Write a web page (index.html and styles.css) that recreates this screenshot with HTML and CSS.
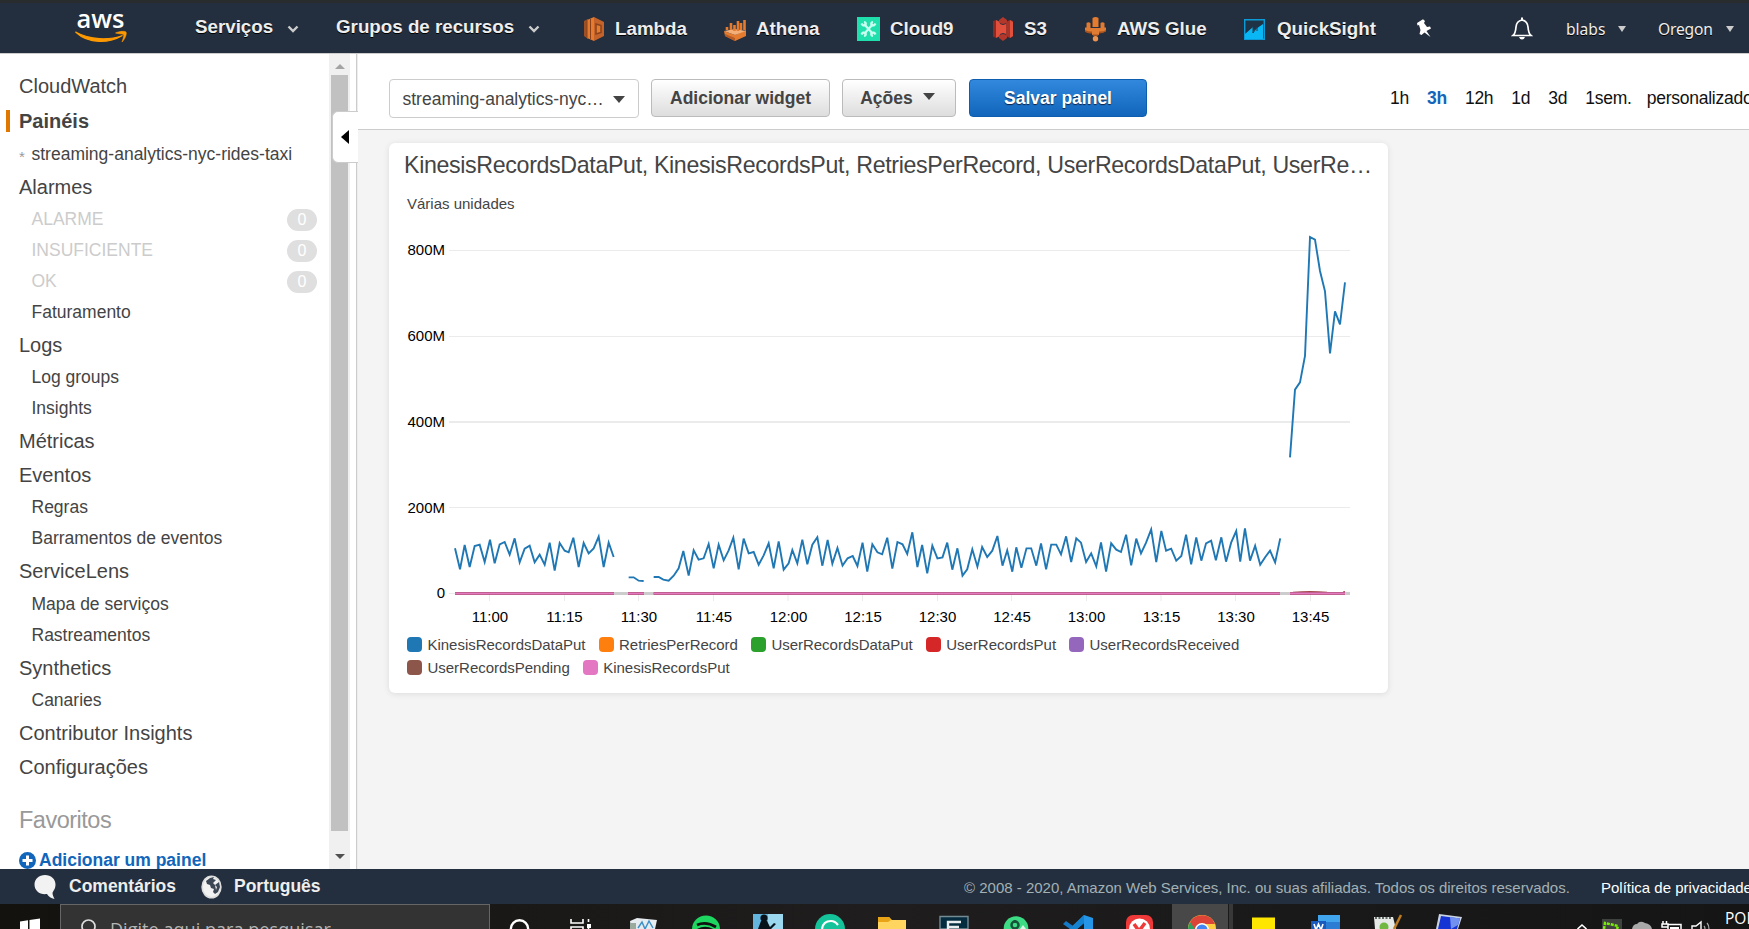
FILE: index.html
```html
<!DOCTYPE html>
<html lang="pt-BR">
<head>
<meta charset="utf-8">
<title>CloudWatch</title>
<link rel="stylesheet" href="styles.css">
</head>
<body>
<header class="nav">
  <svg class="logo" width="54" height="36" viewBox="0 0 54 36"><text x="1.5" y="17" textLength="48" lengthAdjust="spacingAndGlyphs" class="logo-text">aws</text><path d="M.500 21C14 33.500 34 32.500 47.500 24.500C34 29.500 15 29 .500 21Z" fill="#f90" stroke="#f90" stroke-width="1.200"/><path d="M40.500 22C45 20 50 20 51 21C52 23 50 28 47 31C48.500 26.500 49 24.500 48.500 23.500C47 22.500 43 23 40.500 22Z" fill="#f90" stroke="#f90" stroke-width=".600"/></svg>
  <a class="menu services">Serviços<svg width="12" height="8" viewBox="0 0 12 8"><path d="M1.500 1.500L6 6L10.500 1.500" class="chev"/></svg></a>
  <a class="menu groups">Grupos de recursos<svg width="12" height="8" viewBox="0 0 12 8"><path d="M1.500 1.500L6 6L10.500 1.500" class="chev"/></svg></a>
  <a class="pinned lambda"><svg width="22" height="26" viewBox="0 0 22 26"><path d="M1 5L5 3V23L1 20Z" fill="#9d5025"/><path d="M4 4L11 1V25L4 22Z" fill="#e57b2e"/><path d="M11 1L21 6V20L11 25Z" fill="#c4622a"/><path d="M4 4V22M7.500 3V23" stroke="#8a431d" stroke-width="1"/><path d="M13 8L18 9.500V16.500L13 18Z" fill="#e57b2e" stroke="#8a431d" stroke-width="1.500"/></svg><span>Lambda</span></a>
  <a class="pinned athena"><svg width="22" height="26" viewBox="0 0 22 26"><path d="M0 15L11 19L22 14V20L11 25L1 20Z" fill="#e57b2e"/><path d="M0 15L11 13L22 15L11 19Z" fill="#f4ae76"/><path d="M3 14V11M7 14V7M10.500 15V9M14 15V5M17 14V7M20.500 14V4" stroke="#e57b2e" stroke-width="2.600"/><path d="M1 18L11 22V25L1 20Z" fill="#b35a26"/></svg><span>Athena</span></a>
  <a class="pinned cloud9"><svg width="23" height="24" viewBox="0 0 23 24"><path d="M0 0H23V24H0Z" fill="#1fe0ad"/><g fill="none" stroke="#c9fff0" stroke-width="2.200"><path d="M7 7L16 17M16 7L7 17"/><path d="M4.500 6.500Q6 9.500 8.500 8Q9.500 5.500 7 5M18.500 6.500Q17 9.500 14.500 8Q13.500 5.500 16 5M4.500 17.500Q6 14.500 8.500 16Q9.500 18.500 7 19M18.500 17.500Q17 14.500 14.500 16Q13.500 18.500 16 19"/></g></svg><span>Cloud9</span></a>
  <a class="pinned s3"><svg width="22" height="26" viewBox="0 0 22 26"><path d="M1 5L4 4V22L1 20.500ZM21 5L18 4V22L21 20.500Z" fill="#8c2b23"/><path d="M4 4L8 6V20L4 22ZM18 4L21 6V20L18 22Z" fill="#e0503c"/><path d="M8 8L11 9L14 8V18L11 17L8 18Z" fill="#e0503c"/><path d="M7 4L11 1L15 4L15 7L11 8L7 7ZM7 22L11 25L15 22V19L11 18L7 19Z" fill="#b3372b"/><path d="M14 6L18 4V22L14 20Z" fill="#a5342a"/></svg><span>S3</span></a>
  <a class="pinned glue"><svg width="23" height="26" viewBox="0 0 23 26"><path d="M8.500 2Q11.500 0 14.500 2V11H8.500Z" fill="#e57b2e"/><path d="M2.500 7Q4.500 5.500 6.500 7V12H16.500V7Q18.500 5.500 20.500 7V11.500H22V15Q19 17 15 16.500V19H8V16.500Q3 17 1 15V11.500H2.500Z" fill="#e07b33"/><path d="M1 14Q5 16 8 15.500V17.500Q3 17.500 1 15.500ZM22 14Q19 16 15 15.500V17.500Q19 17.500 22 15.500Z" fill="#a5521f"/><path d="M8 18.500H15L13 20.500H10Z" fill="#a5521f"/><circle cx="11.500" cy="22.800" r="2.700" fill="#ef9350"/></svg><span>AWS Glue</span></a>
  <a class="pinned quick"><svg width="21" height="21" viewBox="0 0 21 21"><path d="M.7.700H20.300V20.300H.7Z" fill="#1f3347" stroke="#0b9bd8" stroke-width="1.400"/><path d="M1 15L9 8V12L19 5V20H1Z" fill="#0ab7f5"/><path d="M9 7.500V14L13 8V12" stroke="#1f3c50" fill="none"/></svg><span>QuickSight</span></a>
  <svg class="pin" width="18" height="18" viewBox="0 0 18 18"><path d="M2 4L8 .3L10 2L9 4L12 8L15 7.500L16 9.500L11.500 12L15.500 18L9.500 13.500L6.500 16L4.500 15L5.500 11L4 6L2.500 6.500Z" fill="#fff"/></svg>
  <svg class="bell" width="22" height="23" viewBox="0 0 22 23"><path d="M2 18.500Q4.500 16.500 5 10Q5.500 4 11 3Q16.500 4 17 10Q17.500 16.500 20 18.500Z" fill="none" stroke="#fff" stroke-width="1.700"/><path d="M8 20H14Q13 22.500 11 22.500Q9 22.500 8 20ZM10 .5H12V4H10Z" fill="#fff"/></svg>
  <a class="account user">blabs<i></i></a>
  <a class="account region">Oregon<i></i></a>
</header>

<div class="body">
  <div class="side">
    <nav class="links">
      <a class="head first">CloudWatch</a>
      <a class="head current">Painéis</a>
      <a class="sub board"><small>*</small>streaming-analytics-nyc-rides-taxi</a>
      <a class="head">Alarmes</a>
      <a class="sub off">ALARME<b>0</b></a>
      <a class="sub off">INSUFICIENTE<b>0</b></a>
      <a class="sub off">OK<b>0</b></a>
      <a class="sub">Faturamento</a>
      <a class="head">Logs</a>
      <a class="sub">Log groups</a>
      <a class="sub">Insights</a>
      <a class="head">Métricas</a>
      <a class="head">Eventos</a>
      <a class="sub">Regras</a>
      <a class="sub">Barramentos de eventos</a>
      <a class="head tall">ServiceLens</a>
      <a class="sub">Mapa de serviços</a>
      <a class="sub">Rastreamentos</a>
      <a class="head">Synthetics</a>
      <a class="sub">Canaries</a>
      <a class="head">Contributor Insights</a>
      <a class="head tall">Configurações</a>
      <div class="favs">Favoritos</div>
      <a class="add"><svg width="17" height="17" viewBox="0 0 17 17"><circle cx="8.500" cy="8.500" r="8.500" fill="#1166bb"/><path d="M8.500 3.500V13.500M3.500 8.500H13.500" stroke="#fff" stroke-width="3"/></svg>Adicionar um painel</a>
    </nav>
    <div class="scroll"><i class="up"></i><div class="thumb"></div><i class="down"></i></div>
    <div class="collapse"><i></i></div>
  </div>

  <main class="main">
    <div class="toolbar">
      <div class="select">streaming-analytics-nyc…<i></i></div>
      <div class="btn widget">Adicionar widget</div>
      <div class="btn actions">Ações<i></i></div>
      <div class="btn primary">Salvar painel</div>
      <div class="ranges"><a>1h</a><a class="on">3h</a><a>12h</a><a>1d</a><a>3d</a><a>1sem.</a><a class="custom">personalizado</a></div>
    </div>
    <section class="card">
      <h2>KinesisRecordsDataPut, KinesisRecordsPut, RetriesPerRecord, UserRecordsDataPut, UserRe…</h2>
      <p class="unit">Várias unidades</p>
      <svg class="chart" width="999" height="415" viewBox="389 218 999 415">
        <g class="grid"><path d="M449 250.500H1350M449 336.500H1350M449 507.500H1350"/><path d="M449 422H1350" stroke-width="2"/><path d="M449 593.500H455"/><path d="M489.500 595V601M564.500 595V601M638.500 595V601M713.500 595V601M788 595V601M862.500 595V601M937.500 595V601M1011.500 595V601M1086.500 595V601M1161 595V601M1235.500 595V601M1310.500 595V601"/></g>
        <g class="ylab"><text x="445" y="255">800M</text><text x="445" y="341">600M</text><text x="445" y="427">400M</text><text x="445" y="513">200M</text><text x="445" y="598">0</text></g>
        <g class="xlab"><text x="490" y="622">11:00</text><text x="564.500" y="622">11:15</text><text x="639" y="622">11:30</text><text x="714" y="622">11:45</text><text x="788.500" y="622">12:00</text><text x="863" y="622">12:15</text><text x="937.500" y="622">12:30</text><text x="1012" y="622">12:45</text><text x="1086.500" y="622">13:00</text><text x="1161.500" y="622">13:15</text><text x="1236" y="622">13:30</text><text x="1310.500" y="622">13:45</text></g>
        <path d="M455 593.500H1350" stroke="#ccc" stroke-width="3"/>
        <path d="M1293 592.300Q1310 591 1327 592.300M1343 592L1345 591.500" stroke="#a5484a" stroke-width="1.200" fill="none"/>
        <path d="M455 593.500H614M628 593.500H644M653.500 593.500H1280M1290 593.500H1345" stroke="#c0608f" stroke-width="3"/>
        <path d="M455 593.500H614M628 593.500H644M653.500 593.500H1280M1290 593.500H1345" stroke="#e377c2" stroke-width="1"/>
        <g class="line" transform="translate(380 500) scale(.33333)">
          <polyline points="225,145 240,208 254,135 269,201 284,138 299,134 314,186 330,119 344,190 359,133 374,126 389,164 404,115 419,187 434,146 449,137 464,187 479,164 494,194 509,128 524,212 539,129 554,152 566,157 580,113 596,201 611,129 626,160 641,145 656,110 671,201 686,128 701,171"/>
          <polyline points="746,232 761,232 776,242 791,243"/>
          <polyline points="821,231 836,231 850,239 866,242 881,227 896,205 910,153 926,227 941,151 956,179 971,175 986,132 1001,205 1016,134 1031,181 1046,151 1060,113 1076,208 1091,116 1106,160 1121,156 1136,194 1151,166 1166,130 1181,205 1196,124 1211,209 1226,190 1237,150 1252,190 1267,119 1282,193 1297,134 1312,112 1327,197"/>
        </g>
        <g class="line" transform="translate(820 500) scale(.36352 .33333)">
          <polyline points="6.500,197 21,120 34,191 48,144 62,197 76,175 90,168 103,198 117,128 130,215 144,133 158,157 171,163 185,113 199,206 213,126 227,133 240,162 254,97 268,201 281,135 295,220 309,137 323,175 337,172 350,128 364,209 378,145 392,227 405,208 419,148 433,200 446,141 460,171 474,152 488,108 502,197 515,151 529,215 540,142 554,203 568,145 581,145 595,197 608,130 622,208 636,134 650,134 663,163 677,109 691,186 705,115 718,128 732,186 746,160 760,199 773,127 787,215 801,130 815,149 828,156 842,104 856,196 870,116 883,160 897,128 911,88 925,186 939,93 952,152 966,146 980,182 994,168 1007,104 1021,193 1035,112 1049,182 1062,130 1076,122 1089,181 1104,112 1117,185 1131,128 1145,93 1156,185 1169,85 1183,182 1197,137 1211,194 1225,171 1238,152 1252,187 1266,115"/>
        </g>
        <g class="line" transform="translate(1270 220) scale(.33333)">
          <polyline points="60,712 75,509 90,487 105,408 120,51 135,59 150,153 165,214 180,400 195,274 210,313 225,187"/>
        </g>
      </svg>
      <ul class="legend">
        <li class="c1">KinesisRecordsDataPut</li><li class="c2">RetriesPerRecord</li><li class="c3">UserRecordsDataPut</li><li class="c4">UserRecordsPut</li><li class="c5">UserRecordsReceived</li>
      </ul>
      <ul class="legend">
        <li class="c6">UserRecordsPending</li><li class="c7">KinesisRecordsPut</li>
      </ul>
    </section>
  </main>
</div>

<footer class="footer">
  <svg class="bubble" width="22" height="24" viewBox="0 0 22 24"><path d="M11 0C17 0 21.500 4 21.500 9.500C21.500 14 19 16 18.500 18C18.500 20 19.500 22 20.500 24C17 23.500 14.500 21.500 13 19C6 20 .5 16 .5 9.500C.5 4 5 0 11 0Z" fill="#f2f2f2"/></svg>
  <b class="comments">Comentários</b>
  <svg class="globe" width="21" height="24" viewBox="0 0 21 24"><ellipse cx="10.500" cy="12" rx="9.400" ry="10.800" fill="#f2f2f2" stroke="#ddd" stroke-width="1.600"/><path d="M9 3L13 2L12 4L15 5L12 8L14 10L18 7L19 12L17 17L14 19L12 17L13 14L10 13L9 10L6 9L5 6Z" fill="#3c4654"/><path d="M14 10L16 12L15 15Z" fill="#f2f2f2"/></svg>
  <b class="lang">Português</b>
  <span class="copy">© 2008 - 2020, Amazon Web Services, Inc. ou suas afiliadas. Todos os direitos reservados.</span>
  <a class="policy">Política de privacidade</a>
</footer>

<div class="taskbar">
  <svg class="win" width="60" height="25" viewBox="0 0 60 25"><path d="M20 17.500L28 16.300V25H20ZM29.500 16L40 14.500V25H29.500Z" fill="#fff"/></svg>
  <div class="search"><svg width="18" height="25" viewBox="0 0 18 25"><circle cx="9.500" cy="21.500" r="6.500" fill="none" stroke="#ddd" stroke-width="1.700"/></svg><span>Digite aqui para pesquisar</span></div>
  <svg class="apps" width="1259" height="25" viewBox="490 0 1259 25">
    <circle cx="519.500" cy="25" r="8.700" fill="none" stroke="#fff" stroke-width="2.400"/>
    <path d="M571 15V19H583V15M571 25V23H583V25M588.500 15V18M588.500 21V25" fill="none" stroke="#fff" stroke-width="1.600"/><path d="M587 20H591V24H587Z" fill="#fff"/>
    <path d="M630 17L637 14L657 16L655 25H631Z" fill="#e6ecef"/><path d="M630 19H636V25H630Z" fill="#9aaa9c"/><path d="M638 24L642 18L645 25L649 17L653 24" fill="none" stroke="#3e91c7" stroke-width="1.500"/>
    <circle cx="706" cy="25.500" r="14" fill="#1ed760"/><path d="M697 21Q706 17 716 23M698 26Q706 22 714 27" fill="none" stroke="#111" stroke-width="2.800"/>
    <path d="M753 10H783V25H753Z" fill="#64b5de"/><path d="M768 10H783V25H768Z" fill="#9bd8f0"/><circle cx="764" cy="14" r="3.600" fill="#08121a"/><path d="M758 25L761 17L767 17L770 23L774 19L776 20L771 25Z" fill="#08121a"/>
    <circle cx="830" cy="25" r="15" fill="#15c39a"/><path d="M822 25Q823 17 831 17Q835 17 838 21" fill="none" stroke="#fff" stroke-width="2.200"/>
    <path d="M878 25V13H889L892 16H906V25Z" fill="#ffd45f"/><path d="M878 13H889L891 16L888 18H878Z" fill="#e8a317"/>
    <path d="M940 12.500H968V25H940Z" fill="#052c3e" stroke="#748b94" stroke-width="1.400"/><path d="M961 18H948V25M948 23H959" fill="none" stroke="#e8eef0" stroke-width="2.400"/>
    <circle cx="1016" cy="24.500" r="12.300" fill="#3ddc84"/><circle cx="1015" cy="21" r="3.500" fill="none" stroke="#17533b" stroke-width="2.500"/><path d="M1015 16V19" stroke="#17533b" stroke-width="2.500"/><path d="M1020 25L1023 21L1026 25" fill="#d9f8e8"/>
    <path d="M1084 11L1093 14V25H1084V19L1077 25H1070Z" fill="#2595e8"/><path d="M1063 20L1066 17L1073 22L1070 25Z" fill="#1679c8"/><path d="M1084 11V19L1077 25H1069Z" fill="#1482cf"/>
    <rect x="1126" y="11" width="27" height="22" rx="7" fill="#ef3939"/><circle cx="1139.500" cy="25" r="10.500" fill="#fff"/><path d="M1134 20L1139 27L1145 19" fill="none" stroke="#ef3939" stroke-width="3.500"/>
    <path d="M1172 0H1228V25H1172Z" fill="#484848"/><path d="M1229 0H1233V25H1229Z" fill="#383838"/>
    <circle cx="1202" cy="25" r="14" fill="#ffcd40"/><path d="M1188 25A14 14 0 0 1 1190 18L1197 25Z" fill="#2da160"/><path d="M1190 18A14 14 0 0 1 1215 20H1202Q1196 21 1195 25Z" fill="#db4437"/><circle cx="1202" cy="26" r="7" fill="#fff"/><circle cx="1202" cy="26" r="5.500" fill="#4285f4"/>
    <path d="M1252 13.500H1275V25H1252Z" fill="#ffe600"/>
    <path d="M1318 11H1340V25H1318Z" fill="#41a5ee"/><path d="M1318 18H1340V25H1318Z" fill="#2b7cd3"/><path d="M1311 17H1326V25H1311Z" fill="#185abd"/><path d="M1314 20L1316 26L1318.500 20L1321 26L1323 20" fill="none" stroke="#fff" stroke-width="1.600"/>
    <path d="M1374 13H1393L1396 25H1375Z" fill="#e6e9e5"/><path d="M1375 14H1392" stroke="#5f6965" stroke-dasharray="2 1.500" stroke-width="2"/><circle cx="1384" cy="23" r="4.500" fill="#70b840"/><path d="M1401 11L1394 25" stroke="#bd7b22" stroke-width="2.500"/>
    <path d="M1439 10L1462 13L1458 25H1436Z" fill="#c8d2e1"/><path d="M1441 12L1460 14.500L1457 25H1438Z" fill="#1634d4"/><path d="M1450 13L1460 14.500L1458 21L1451 25Z" fill="#7290f0"/>
    <path d="M1577.500 25L1582 21L1586.500 25" fill="none" stroke="#fff" stroke-width="1.600"/>
    <path d="M1602 15H1622V25H1602Z" fill="#3f4340"/><path d="M1604 25L1605 19L1618 22L1617 25" fill="none" stroke="#76f000" stroke-width="2.500" stroke-dasharray="3 1"/>
    <path d="M1632 25Q1633 20 1637 20Q1640 16 1645 19Q1651 20 1652 25Z" fill="#a9a9a9"/>
    <path d="M1668 25V20.500H1681V25M1663 17V20M1666.500 17V20M1662 20H1668V23H1662Z" fill="none" stroke="#fff" stroke-width="1.500"/><path d="M1670 23H1679V25H1670Z" fill="#fff"/>
    <path d="M1692 25V22H1696L1701 18V25" fill="none" stroke="#fff" stroke-width="1.400"/><path d="M1704 22Q1705 23 1705 25M1707 19Q1709 21 1709 25" fill="none" stroke="#aaa" stroke-width="1.200"/>
    <text x="1725" y="20" class="kbd">POR</text>
  </svg>
</div>
</body>
</html>
```

FILE: styles.css
```css
* { box-sizing: border-box; }
html, body { margin: 0; height: 929px; overflow: hidden; }
body { display: flex; flex-direction: column; width: 1749px; background: #f4f4f4; font-family: "Liberation Sans", Arial, sans-serif; color: #444; white-space: nowrap; }
i { display: block; width: 0; height: 0; flex: none; }
svg { flex: none; display: block; }

/* top navigation */
.nav { height: 54px; flex: none; background: #232f3e; border-top: 3px solid #292c2e; border-bottom: 1px solid #ccc; display: flex; align-items: flex-start; padding-left: 75px; color: #eee; font-size: 18.75px; font-weight: bold; line-height: 22px; text-shadow: 0 1px 0 #000; }
.logo { margin-top: 8px; }
.logo-text { font: 600 26px "Open Sans", sans-serif; fill: #fff; text-shadow: none; }
.chev { fill: none; stroke: #ccc; stroke-width: 2.4; }
.menu { display: flex; align-items: center; margin-top: 13px; justify-content: space-between; }
.menu svg { margin-top: 4px; }
.services { margin-left: 66px; width: 104px; }
.groups { margin-left: 37px; width: 204px; }
.pinned { display: flex; align-items: center; height: 28px; margin-top: 12px; width: 141px; gap: 10px; }
.pinned span { margin-top: -1px; }
.lambda { margin-left: 43px; }
.athena { width: 133px; }
.cloud9 { width: 135px; }
.s3 { width: 92px; }
.glue { width: 160px; }
.quick { width: 171px; gap: 12px; }
.pin { margin-top: 16px; }
.bell { margin: 14px 0 0 78px; }
.account { display: flex; align-items: center; justify-content: space-between; font: 15.6px/22px "Noto Sans", sans-serif; margin-top: 15px; color: #eee; }
.account i { border: 4.5px solid transparent; border-top: 6px solid #ccc; border-bottom: 0; }
.user { width: 60px; margin-left: 33px; }
.region { width: 76px; margin-left: 32px; letter-spacing: -.2px; }

.body { display: flex; height: 815px; flex: none; }

/* sidebar */
.side { width: 358px; flex: none; display: flex; background: #fff; position: relative; border-right: 1px solid #eee; }
.links { width: 329px; overflow: hidden; padding-top: 15px; display: flex; flex-direction: column; }
.links a, .favs { flex: none; display: flex; align-items: center; }
.head { height: 34px; font-size: 20px; padding-left: 19px; }
.current { height: 36px; font-weight: bold; padding-left: 9px; margin-left: 6px; }
.current::before { content: ""; width: 4px; height: 22px; background: #e07700; margin: 0 9px 0 -9px; }
.sub { height: 31px; font-size: 17.5px; padding-left: 31.5px; }
.board { padding-left: 19px; height: 30px; margin-bottom: 1px; }
.board small { width: 12.5px; color: #999; font-size: 15px; padding-top: 4px; }
.off { color: #ccc; padding-right: 12px; justify-content: space-between; }
.off b { width: 30px; height: 22px; border-radius: 11px; background: #dfdfdf; color: #fff; font: 16px/22px "Liberation Sans", sans-serif; text-align: center; }
.tall { height: 35px; }
.favs { height: 52px; margin-top: 9px; padding-left: 19px; font-size: 23.5px; letter-spacing: -.5px; color: #999; }
.add { padding-left: 19px; height: 28px; font-size: 17.5px; font-weight: bold; color: #1166bb; gap: 3px; }
.scroll { width: 21px; background: #f0f0f0; display: flex; flex-direction: column; align-items: center; }
.up { margin: 10px 0 6px; border: 5px solid transparent; border-bottom-color: #a3a3a3; border-top: 0; }
.thumb { width: 17px; height: 756px; background: #c1c1c1; }
.down { margin-top: 23px; border: 5px solid transparent; border-top-color: #505050; border-bottom: 0; }
.side::after { content: ""; width: 1px; margin-left: 6px; background: #ccc; }
.collapse { position: absolute; left: 332px; top: 57px; width: 26px; height: 52px; border: 1px solid #ccc; border-right: 0; border-radius: 6px 0 0 6px; background: #fff; padding: 18px 0 0 8px; }
.collapse i { border: 7px solid transparent; border-right: 8px solid #000; border-left: 0; }

/* toolbar */
.main { flex: 1; min-width: 0; overflow: hidden; }
.toolbar { height: 76px; background: #fff; border-bottom: 1px solid #ccc; display: flex; padding: 25px 0 0 31px; font-size: 17.5px; }
.select { width: 250px; height: 39px; border: 1px solid #ccc; border-radius: 4px; display: flex; align-items: center; justify-content: space-between; padding: 1px 13px 0 12.5px; flex: none; }
.select i, .actions i { border: 6px solid transparent; border-top: 7px solid #444; border-bottom: 0; }
.btn { height: 38px; flex: none; border: 1px solid #bbb; border-radius: 4px; background: linear-gradient(#fff, #ddd); font-weight: bold; display: flex; align-items: center; justify-content: center; margin-left: 12px; }
.widget { width: 179px; }
.actions { width: 114px; gap: 10px; padding-right: 3px; }
.actions i { margin-top: -3px; }
.primary { width: 178px; margin-left: 13px; color: #fff; border-color: #0f5dae; background: linear-gradient(#3188dd, #1166bb); text-shadow: 0 1px 1px #124; }
.ranges { display: flex; margin-left: 243px; gap: 18px; color: #111; line-height: 38px; letter-spacing: -.25px; }
.on { color: #1166bb; font-weight: bold; }
.custom { margin-left: -3px; }

/* widget */
.card { width: 999px; height: 550px; margin: 13px 0 0 31px; background: #fff; border-radius: 6px; box-shadow: 0 1px 6px rgba(0,0,0,.1); overflow: hidden; }
.card h2 { margin: 0; padding: 8px 0 0 15px; height: 48px; font-size: 23.2px; line-height: 28px; letter-spacing: -.34px; font-weight: normal; }
.unit { margin: 0; padding-left: 18px; height: 27px; font-size: 15px; line-height: 26px; }
.grid { stroke: #ebebeb; stroke-width: 1; }
.ylab, .xlab { font-size: 15px; fill: #000; }
.ylab { text-anchor: end; }
.xlab { text-anchor: middle; }
.line polyline { fill: none; stroke: #1f77b4; stroke-width: 1.9; vector-effect: non-scaling-stroke; }
.legend { list-style: none; display: flex; gap: 13px; margin: 0; padding-left: 18px; height: 23px; font-size: 15px; letter-spacing: -.02px; }
.legend li { display: flex; align-items: center; gap: 5.5px; }
.legend li::before { content: ""; width: 15px; height: 15px; border-radius: 4px; }
.c1::before { background: #1f77b4; }
.c2::before { background: #ff7f0e; }
.c3::before { background: #2ca02c; }
.c4::before { background: #d62728; }
.c5::before { background: #9467bd; }
.c6::before { background: #8c564b; }
.c7::before { background: #e377c2; }

/* footer */
.footer { height: 35px; flex: none; background: #232f3e; display: flex; align-items: center; padding-left: 34px; font-size: 17.5px; color: #eee; overflow: hidden; }
.bubble { margin-top: 1px; }
.comments { margin-left: 13px; width: 132px; }
.globe { margin: 1px 0 0; }
.comments, .lang { flex: none; }
.globe { margin-left: 0; }
.lang { margin-left: 12px; width: 730px; }
.comments { margin-right: 0; }
.copy { font-size: 15px; color: #a3b1b5; width: 637px; flex: none; padding-top: 2px; }
.policy { font-size: 15px; color: #fff; flex: none; padding-top: 2px; }
.globe { padding: 0; margin-right: 0; position: static; }
.comments { width: 132px; }

/* system taskbar */
.taskbar { height: 25px; flex: none; display: flex; background: linear-gradient(90deg, #14120e, #1f1d1d 50%, #151515); overflow: hidden; }
.search { width: 430px; height: 25px; flex: none; background: #333; border: 1px solid #666; border-bottom: 0; display: flex; padding-left: 18px; overflow: hidden; }
.search span { font: 18px/24px "Open Sans", sans-serif; color: #b5b5b5; margin: 12px 0 0 13px; letter-spacing: .05px; }
.kbd { font: 15.5px "Open Sans", sans-serif; fill: #fff; }
```
